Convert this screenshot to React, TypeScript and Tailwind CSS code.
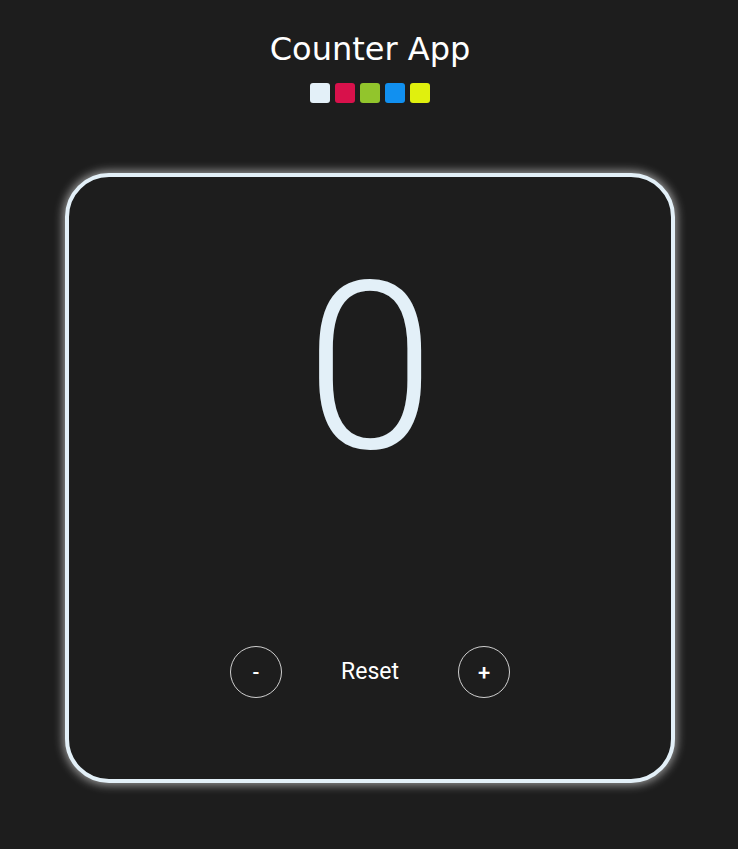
import React, { useState } from "react";

export default function App() {
  const [count, setCount] = useState(0);
  const colors = ["#e3f0f8", "#d8114b", "#92c52c", "#1190f0", "#e0f00e"];
  return (
    <div className="min-h-[849px] w-full bg-[#1d1d1d] pl-[2px] pt-[31px] text-white">
      <h1 className="text-center font-['DejaVu_Sans',sans-serif] text-[32px] leading-[37px] text-white">
        Counter App
      </h1>
      <div className="mt-[15px] flex justify-center gap-[5px]">
        {colors.map((c) => (
          <div
            key={c}
            className="h-[20px] w-[20px] rounded-[3px]"
            style={{ backgroundColor: c }}
          />
        ))}
      </div>
      <div className="mx-auto mt-[70px] flex h-[610px] w-[610px] flex-col items-center justify-between rounded-[44px] border-4 border-[#e3f0f8] bg-[#1d1d1d] pb-[81px] pt-[75px] shadow-[0_0_10px_2px_rgba(255,255,255,0.55)]">
        <div className="font-['Roboto',sans-serif] text-[233px] font-light leading-none text-[#e3f0f8]">
          {count}
        </div>
        <div className="flex items-center gap-[38px] font-['Roboto',sans-serif]">
          <button
            onClick={() => setCount(count - 1)}
            className="flex h-[52px] w-[52px] items-center justify-center rounded-full border border-[#cfcfcf] text-[20px] font-medium text-white"
          >
            -
          </button>
          <button
            onClick={() => setCount(0)}
            className="w-[100px] text-center text-[23px] text-white"
          >
            Reset
          </button>
          <button
            onClick={() => setCount(count + 1)}
            className="flex h-[52px] w-[52px] items-center justify-center rounded-full border border-[#cfcfcf] text-[22px] font-medium text-white"
          >
            +
          </button>
        </div>
      </div>
    </div>
  );
}
